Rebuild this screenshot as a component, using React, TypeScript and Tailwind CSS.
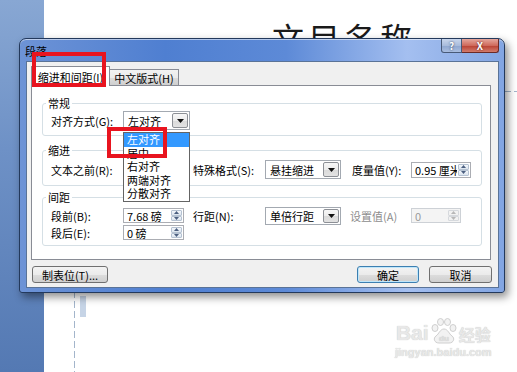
import React from "react";

const FONT = "font-['Noto_Sans_CJK_SC','Liberation_Sans',sans-serif]";

function DropBtn() {
  return (
    <div className="w-[16px] h-full shrink-0 border border-[#8d9096] rounded-[2px] bg-[linear-gradient(#f7f7f7,#ececec_50%,#dadada_51%,#e2e2e2)] flex items-center justify-center">
      <svg width="7" height="4" viewBox="0 0 7 4">
        <path d="M0 0h7L3.5 4z" fill="#111" />
      </svg>
    </div>
  );
}

function Combo({ value, className }: { value: string; className: string }) {
  return (
    <div className={`flex shrink-0 border border-[#a3a9b1] bg-white p-px ${className}`}>
      <span className="flex-1 flex items-center pl-[3px] text-[11px] leading-[12px] text-black">{value}</span>
      <DropBtn />
    </div>
  );
}

function SpinHalf({ up, disabled }: { up?: boolean; disabled?: boolean }) {
  return (
    <div
      className={`flex-1 flex items-center justify-center border rounded-[1px] ${
        disabled ? "border-[#d6d9dd] bg-[#f2f2f2]" : "border-[#b5c2d2] bg-[linear-gradient(#f4f7fb,#dbe4ee)]"
      }`}
    >
      <svg width="5" height="3" viewBox="0 0 5 3">
        <path d={up ? "M0 3h5L2.5 0z" : "M0 0h5L2.5 3z"} fill={disabled ? "#b8b8b8" : "#4b5f80"} />
      </svg>
    </div>
  );
}

function Spin({ value, className, disabled }: { value: string; className: string; disabled?: boolean }) {
  return (
    <div
      className={`flex shrink-0 border ${
        disabled ? "border-[#cdd1d6] bg-[#f4f4f4] text-[#9a9a9a]" : "border-[#abadb3] bg-white text-black"
      } ${className}`}
    >
      <span className="flex-1 min-w-0 overflow-hidden whitespace-nowrap pl-[3px] flex items-center text-[11px] leading-[12px]">
        {value}
      </span>
      <div className="w-[13px] shrink-0 flex flex-col p-px">
        <SpinHalf up disabled={disabled} />
        <SpinHalf disabled={disabled} />
      </div>
    </div>
  );
}

function Label({ children, className }: { children: React.ReactNode; className: string }) {
  return <span className={`shrink-0 text-[11px] leading-[12px] whitespace-nowrap ${className}`}>{children}</span>;
}

function Btn({ children, className }: { children: React.ReactNode; className: string }) {
  return (
    <button
      className={`h-[17px] rounded-[3px] border text-[11px] leading-[12px] text-black bg-[linear-gradient(#f3f3f3,#ebebeb_50%,#dddddd_51%,#cfcfcf)] ${className}`}
    >
      {children}
    </button>
  );
}

const ALIGN = ["左对齐", "居中", "右对齐", "两端对齐", "分散对齐"];

function Dialog() {
  return (
    <div className="absolute left-[19px] top-[38px] z-10 w-[486px] h-[255px] flex flex-col rounded-t-[7px] rounded-b-[3px] border border-[#23395c] bg-[linear-gradient(90deg,#6d93d6_0%,#4f7fd1_30%,#5d8ad7_55%,#a4bff0_80%,#82a5e2_100%)] shadow-[inset_0_1px_0_rgba(255,255,255,0.55),3px_4px_9px_rgba(0,0,0,0.45)]">
      {/* title bar */}
      <div className="h-[22px] flex items-start">
        <span className="mt-[6px] ml-[5px] text-[11px] leading-[12px] text-black">段落</span>
        <div className="ml-auto mr-[5px] flex">
          <div className="w-[21px] h-[14px] rounded-bl-[3px] border border-t-0 border-[#485a78] bg-[linear-gradient(#c9d6ec,#a9bcdc_50%,#8ea6cf_51%,#aabee0)] flex items-center justify-center text-[10px] leading-[10px] font-bold text-white [text-shadow:0_0_2px_#1e2d48]">
            ?
          </div>
          <div className="w-[37px] h-[14px] rounded-br-[3px] border border-t-0 border-l-0 border-[#6b2a26] bg-[linear-gradient(#e5a79d,#cf6a5c_50%,#b93f31_51%,#d27c6c)] flex items-center justify-center text-[10px] leading-[10px] font-bold text-white [text-shadow:0_0_2px_#4a1410]">
            X
          </div>
        </div>
      </div>

      {/* client area */}
      <div className="ml-[6px] mr-[5px] h-[227px] border border-[#5a7397] bg-[#f0f0f0] flex flex-col">
        {/* tabs */}
        <div className="relative z-10 ml-[4px] mt-[4px] -mb-px h-[20px] flex items-end">
          <div className="h-[20px] w-[79px] border border-b-0 border-[#898c95] bg-white flex items-center justify-center text-[11px] leading-[12px]">
            缩进和间距(I)
          </div>
          <div className="mb-px h-[16px] w-[69px] border border-l-0 border-b-0 border-[#898c95] bg-[linear-gradient(#f2f2f2,#ebebeb_50%,#dddddd_51%,#cfcfcf)] flex items-center justify-center text-[11px] leading-[12px]">
            中文版式(H)
          </div>
        </div>

        {/* tab panel */}
        <div className="ml-[4px] w-[460px] h-[175px] border border-[#898c95] bg-white pt-[11px] flex flex-col">
          {/* 常规 */}
          <fieldset className="relative z-20 ml-[10px] mr-[8px] border border-[#d5dfe5] rounded-[3px] px-[8px] pb-[5px]">
            <legend className="ml-[-5px] px-[2px] text-[11px] leading-[12px]">常规</legend>
            <div className="mt-[2px] h-[19px] flex items-center">
              <Label className="w-[72px]">对齐方式(G):</Label>
              <div className="relative">
                <Combo value="左对齐" className="w-[67px] h-[19px]" />
                <div className="absolute left-0 top-[21px] z-20 w-[67px] border border-[#646464] bg-white">
                  {ALIGN.map((a, i) => (
                    <div
                      key={a}
                      className={`h-[13.5px] pl-[3px] text-[11px] leading-[13.5px] ${
                        i === 0 ? "bg-[#3399ff] text-white" : "text-black"
                      }`}
                    >
                      {a}
                    </div>
                  ))}
                </div>
              </div>
            </div>
          </fieldset>

          {/* 缩进 */}
          <fieldset className="mt-[8px] ml-[10px] mr-[8px] border border-[#d5dfe5] rounded-[3px] px-[8px] pb-[6px]">
            <legend className="ml-[-5px] px-[2px] text-[11px] leading-[12px]">缩进</legend>
            <div className="mt-[4px] h-[19px] flex items-center">
              <Label className="w-[72px]">文本之前(R):</Label>
              <Spin value="" className="w-[61px] h-[15px]" />
              <Label className="ml-[9px] w-[72px]">特殊格式(S):</Label>
              <Combo value="悬挂缩进" className="w-[76px] h-[19px]" />
              <Label className="ml-[11px] w-[59px]">度量值(Y):</Label>
              <Spin value="0.95 厘米" className="w-[60px] h-[16px]" />
            </div>
          </fieldset>

          {/* 间距 */}
          <fieldset className="mt-[5px] ml-[10px] mr-[8px] border border-[#d5dfe5] rounded-[3px] px-[8px] pb-[4px]">
            <legend className="ml-[-5px] px-[2px] text-[11px] leading-[12px]">间距</legend>
            <div className="mt-[4px] h-[17px] flex items-center">
              <Label className="w-[72px]">段前(B):</Label>
              <Spin value="7.68 磅" className="w-[61px] h-[15px]" />
              <Label className="ml-[9px] w-[72px]">行距(N):</Label>
              <Combo value="单倍行距" className="w-[76px] h-[18px]" />
              <Label className="ml-[9px] w-[61px] text-[#8d8d8d]">设置值(A)</Label>
              <Spin value="0" className="w-[50px] h-[15px]" disabled />
            </div>
            <div className="h-[17px] flex items-center">
              <Label className="w-[72px]">段后(E):</Label>
              <Spin value="0 磅" className="w-[61px] h-[15px]" />
            </div>
          </fieldset>
        </div>

        {/* buttons */}
        <div className="mt-[6px] flex">
          <Btn className="ml-[5px] w-[76px] border-[#707070]">制表位(T)...</Btn>
          <Btn className="ml-auto w-[62px] border-[#3c7fb1] shadow-[inset_0_0_0_1px_#bfe6fa]">确定</Btn>
          <Btn className="ml-[10px] mr-[6px] w-[63px] border-[#707070]">取消</Btn>
        </div>
      </div>
    </div>
  );
}

function Watermark() {
  return (
    <div className="absolute left-[351px] top-[318px] flex flex-col items-center text-[#e8e8e8] [text-shadow:0_0_1px_#bdbdbd]">
      <div className="flex items-end">
        <span className="text-[21px] leading-[22px] font-bold font-['Liberation_Sans',sans-serif]">Bai</span>
        <svg width="28" height="26" viewBox="0 0 28 26" className="mx-[1px]">
          <g fill="#f2f2f2" stroke="#cfcfcf" strokeWidth="1">
            <ellipse cx="5" cy="10" rx="3" ry="3.5" />
            <ellipse cx="10.5" cy="4" rx="3" ry="3.5" />
            <ellipse cx="17.5" cy="4" rx="3" ry="3.5" />
            <ellipse cx="23" cy="10" rx="3" ry="3.5" />
            <path d="M14 11c-4 0-5 5-8 7s-2 7 3 7h10c5 0 6-5 3-7s-4-7-8-7z" />
          </g>
          <text x="14" y="22.5" textAnchor="middle" fontSize="8" fontWeight="bold" fill="#e0e0e0" fontFamily="Liberation Sans, sans-serif">
            du
          </text>
        </svg>
        <span className="text-[16px] leading-[20px] font-bold">经验</span>
      </div>
      <span className="mt-[2px] text-[11px] leading-[12px] font-bold font-['Liberation_Sans',sans-serif]">
        jingyan.baidu.com
      </span>
    </div>
  );
}

export default function App() {
  return (
    <div className={`relative flex w-[517px] h-[372px] overflow-hidden bg-white ${FONT}`}>
      {/* word window side */}
      <div className="w-[44px] h-full shrink-0 bg-[linear-gradient(#88a7d3,#6e91c6_40%,#5479b3)]" />

      {/* document page */}
      <div className="relative flex-1 h-full bg-white">
        <span className="absolute left-[228px] top-[21px] text-[32px] leading-none tracking-[4px] text-[#1a1a1a] whitespace-nowrap">
          文目名称
        </span>
        <div className="absolute left-[30px] top-[91px] bottom-0 w-px bg-[repeating-linear-gradient(to_bottom,#a3b5cb_0_7px,transparent_7px_10px)]" />
        <div className="absolute left-[30px] right-0 top-[91px] h-px bg-[repeating-linear-gradient(to_right,#a3b5cb_0_7px,transparent_7px_10px)]" />
        <div className="absolute left-[36px] top-[296px] w-[6px] h-[21px] bg-[#c6d4e6]" />
        <Watermark />
      </div>

      <Dialog />

      {/* highlight boxes */}
      <div className="absolute left-[32px] top-[52px] z-30 w-[74px] h-[35px] border-[4px] border-[#e8141f]" />
      <div className="absolute left-[107px] top-[127px] z-30 w-[60px] h-[31px] border-[4px] border-[#e8141f]" />
    </div>
  );
}
